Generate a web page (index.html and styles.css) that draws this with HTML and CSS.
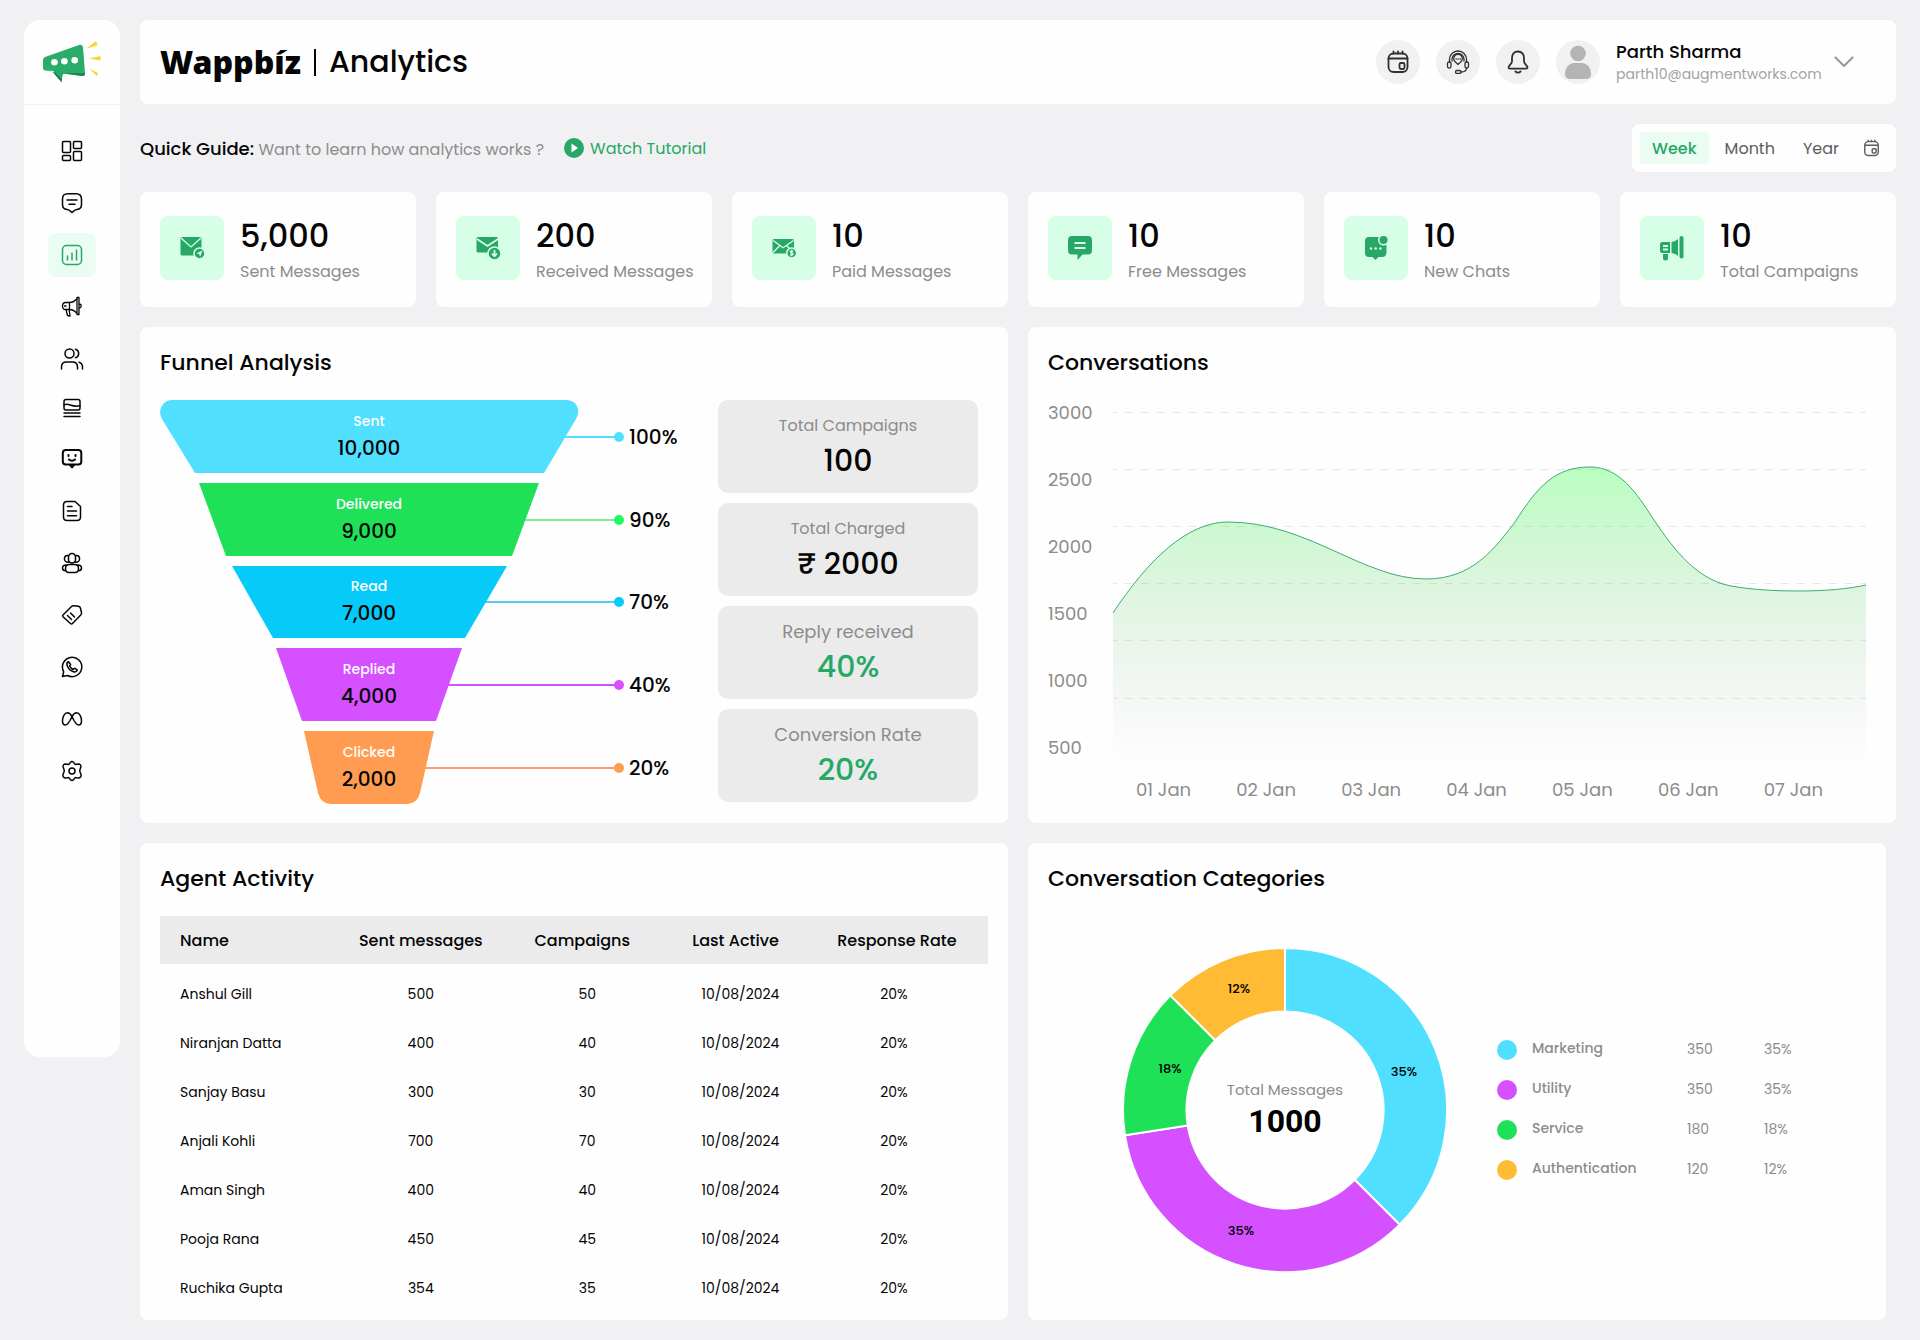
FILE: index.html
```html
<!DOCTYPE html>
<html lang="en">
<head>
<meta charset="utf-8">
<meta name="viewport" content="width=device-width, initial-scale=1">
<title>Wappbíz | Analytics</title>
<link rel="stylesheet" href="styles.css">
</head>
<body>
<div class="app">
  <aside class="sidebar">
    <a class="logo" href="#" aria-label="Wappbíz home">
      <svg width="60" height="44" viewBox="0 0 60 44">
        <path d="M2 30L20 34.500L19.700 42.500L11 32.500Z" fill="#0f7a45"/>
        <path d="M1 20Q1 18 3 17L37 5Q40 4 41 7L43 33Q43 36.500 40 36L20 33.500L19.500 40L11.500 31L3 30.500Q1 30 1 28Z" fill="#2aad68"/>
        <path d="M11.500 31.500L40 36Q43 36.500 43 33L21 33L19.500 40.500Z" fill="#148a50"/>
        <path d="M11.500 30L20 32.500L19.300 39Z" fill="#2aad68"/>
        <g fill="#fff"><circle cx="12.400" cy="22.300" r="3.300"/><circle cx="22.400" cy="21.300" r="3.300"/><circle cx="32.700" cy="20.300" r="3.300"/></g>
        <g fill="#fbd534"><path d="M44.500 8.500L54 1L55.500 5.500Z"/><path d="M47 18.600L58.500 16V20.500Z"/><path d="M47 28.500L56 33L54.800 36Z"/></g>
      </svg>
    </a>
    <nav class="nav" aria-label="Main">
      <a class="nav-item" href="#" aria-label="Dashboard"><svg class="icon" viewBox="0 0 24 24"><rect x="2.500" y="2.500" width="8" height="11" rx="1"/><rect x="13.500" y="2.500" width="8" height="7" rx="1"/><rect x="2.500" y="16.500" width="8" height="5" rx="1"/><rect x="13.500" y="12.500" width="8" height="9" rx="1"/></svg></a>
      <a class="nav-item" href="#" aria-label="Chats"><svg class="icon" viewBox="0 0 24 24"><path d="M8 2.800h8c4 0 5.500 1.600 5.500 5.500v5c0 3.600-1.500 5-4.500 5.200-1.200.1-2 .4-2.800 1.200L12 21.500l-2.200-1.800c-.8-.8-1.600-1.100-2.800-1.200-3-.2-4.500-1.600-4.500-5.200v-5C2.500 4.400 4 2.800 8 2.800zM7 9h10M9 13.200h6"/></svg></a>
      <a class="nav-item active" href="#" aria-label="Analytics" aria-current="page"><svg class="icon" viewBox="0 0 24 24"><rect x="2.500" y="2.500" width="19" height="19" rx="4"/><path d="M7.500 13v4M12 10v7M16.500 7v10"/></svg></a>
      <a class="nav-item" href="#" aria-label="Campaigns"><svg class="icon thin" viewBox="0 0 24 24"><path d="M9.500 7.500h-4c-2 0-3 1.500-3 3.500s1 3.500 3 3.500h4zM9.500 7.500c3 0 5.500-1.500 7.500-4v15c-2-2.500-4.500-4-7.500-4M17 2.500h2v17h-2zM19.500 9c2.300.3 2.300 3.700 0 4M6 14.500l1.500 6 2.500.5-.8-6M4.500 11h1.500"/></svg></a>
      <a class="nav-item" href="#" aria-label="Contacts"><svg class="icon" viewBox="0 0 24 24"><circle cx="9.500" cy="6.500" r="4.500"/><path d="M1.500 22v-2c0-3 2-5 5-5h6c3 0 5 2 5 5v2M15.500 2.200a4.500 4.500 0 0 1 0 8.600M19 15.200c2.200.6 3.500 2.300 3.500 4.800v2"/></svg></a>
      <a class="nav-item short" href="#" aria-label="Templates"><svg class="icon" viewBox="0 0 24 24"><rect x="4" y="2.500" width="16" height="10.500" rx="2"/><path d="M4 8c5-3 7 3 16 .8M4 16h16M4 19.500h16"/></svg></a>
      <a class="nav-item" href="#" aria-label="Chatbot"><svg class="icon bold" viewBox="0 0 24 24"><rect x="2.800" y="3" width="18.500" height="14.500" rx="3"/><path d="M10 18l2 2.500 2-2.500zM8.500 8v1M15.500 8v1M9 12.500c1.500 1.500 4.500 1.500 6 0"/></svg></a>
      <a class="nav-item" href="#" aria-label="Documents"><svg class="icon" viewBox="0 0 24 24"><path d="M7 2.500h8l5.500 5V18c0 2.500-1 3.500-3.500 3.500H7c-2.500 0-3.500-1-3.500-3.500V6c0-2.500 1-3.500 3.500-3.500zM7.500 7.500H12M7.500 12h9M7.500 16.800h9"/></svg></a>
      <a class="nav-item" href="#" aria-label="Groups"><svg class="icon" viewBox="0 0 24 24"><rect x="8.500" y="2.500" width="7" height="9.500" rx="3.500"/><path d="M8.500 4.500C5.500 4 4 6 4.500 8.500c.3 2 2 3 4.500 2.500M15.500 4.500c3-.5 4.500 1.500 4 4-.3 2-2 3-4.500 2.500M9.500 13.500h5c2.500 0 4 1.500 4 4s-1 4-3.500 4H9c-2.500 0-3.500-1.500-3.500-4s1.500-4 4-4zM6.500 14c-2.500-.2-4 1-4 3 0 1.800 1 2.800 3 2.800M17.500 14c2.500-.2 4 1 4 3 0 1.800-1 2.800-3 2.800"/></svg></a>
      <a class="nav-item" href="#" aria-label="Tags"><svg class="icon" viewBox="0 0 24 24"><path d="M3 12L11.500 3.500Q12.500 2.500 14 2.700L18.500 3.300Q20 3.600 20.400 5L21.500 9.500Q21.800 11 20.700 12L12.500 20.500Q11.500 21.500 10.400 20.500L3 13.700Q2.200 12.800 3 12zM7.500 12.500l4 4M10.500 10l4 4"/></svg></a>
      <a class="nav-item" href="#" aria-label="WhatsApp"><svg class="icon" viewBox="0 0 24 24"><path d="M2.500 21.500l1.200-4.700A9.700 9.700 0 1 1 7.500 20.500zM8.500 6.800c-1.500.7-2 2.300-1.200 4.200 1.200 2.900 3.300 5 6.200 5.800 1.800.5 3.300-.3 3.700-2l-2.700-1.600-1.400 1.300c-1.700-.8-2.800-1.900-3.500-3.500l1-1.500z"/></svg></a>
      <a class="nav-item" href="#" aria-label="Meta"><svg class="icon" viewBox="0 0 24 24"><path d="M12 9.500C10.500 7 9.300 5.800 7.500 5.800c-3 0-5 4-5 8 0 2.700 1 4.200 2.800 4.200 2 0 3-1.500 4.700-4.500L12 9.500c1.500-2.500 2.700-3.700 4.500-3.700 3 0 5 4 5 8 0 2.700-1 4.200-2.800 4.200-2 0-3-1.500-4.700-4.500z"/></svg></a>
      <a class="nav-item" href="#" aria-label="Settings"><svg class="icon" viewBox="0 0 24 24"><circle cx="12" cy="12" r="3"/><path d="M10.500 3.200Q12 1.800 13.500 3.200L14.600 4.800Q15.300 5.600 16.500 5.300L18.600 4.900Q20.200 4.900 20.800 6.500Q21.300 7.400 20.600 8.800L20 10.500Q19.500 12 20.200 13.500L21 15.500Q21.400 17 20.500 18Q19.500 19.300 18 19L16.500 18.700Q15.300 18.400 14.600 19.200L13.500 20.800Q12 22.200 10.500 20.800L9.400 19.200Q8.700 18.400 7.500 18.700L6 19Q4.500 19.300 3.500 18Q2.600 17 3 15.500L3.800 13.500Q4.500 12 4 10.500L3.400 8.800Q2.700 7.400 3.200 6.500Q3.800 4.900 5.400 4.900L7.500 5.300Q8.700 5.600 9.400 4.800Z"/></svg></a>
    </nav>
  </aside>

  <main class="main">
    <header class="topbar">
      <h1 class="page-title"><span class="brand">Wappbíz</span><span class="divider"></span><span class="section">Analytics</span></h1>
      <div class="actions">
        <button class="round" type="button" aria-label="Calendar"><svg class="icon dark" viewBox="0 0 24 24"><rect x="2.500" y="3.500" width="19" height="18.500" rx="5"/><path d="M2.500 8.500h19M7.500 1.500v2M12 1.500v2M16.500 1.500v2"/><rect x="13.500" y="13" width="5" height="6" rx="1.500"/></svg></button>
        <button class="round" type="button" aria-label="Support"><svg class="icon dark thin" viewBox="0 0 24 24"><path d="M3.500 12V9.500a8.500 8.500 0 0 1 17 0V12M6 11V9.500a6 6 0 0 1 12 0V11"/><path d="M12 14.500l-2.200-2.100a4.300 4.300 0 1 1 4.400 0zM10 9h.3M12 9h.3M14 9h.3"/><rect x="1.500" y="12" width="3.500" height="6" rx="1.500"/><rect x="19" y="12" width="3.500" height="6" rx="1.500"/><path d="M20.500 18c0 3-2 4-5.500 4"/><rect x="9.500" y="20.500" width="5.500" height="3" rx="1.500"/></svg></button>
        <button class="round" type="button" aria-label="Notifications"><svg class="icon dark" viewBox="0 0 24 24"><path d="M12 1.500c-4 0-6 3-6 6.500v3.500c0 2-3.500 4.500-3.500 6 0 .8.500 1.200 1.500 1.200h16c1 0 1.500-.4 1.500-1.200 0-1.500-3.500-4-3.500-6V8c0-3.500-2-6.500-6-6.500zM9.500 21.500c1.300 1.300 3.700 1.300 5 0"/></svg></button>
        <svg class="avatar" viewBox="0 0 44 44"><circle cx="22" cy="22" r="22" fill="#f1f1f3"/><circle cx="22" cy="13.500" r="7.800" fill="#b4b4b4"/><path d="M18 23h8c5 0 9 5 9 11 0 3-2 5-5 5H14c-3 0-5-2-5-5 0-6 4-11 9-11z" fill="#b4b4b4"/></svg>
        <div class="account">
          <div class="user"><span class="user-name">Parth Sharma</span><span class="user-mail">parth10@augmentworks.com</span></div>
          <button class="chevron" type="button" aria-label="Account menu"><svg width="20" height="12" viewBox="0 0 20 12"><path d="M1.500 1.500L10 10l8.500-8.500" fill="none" stroke="#9b9b9b" stroke-width="2.200" stroke-linecap="round" stroke-linejoin="round"/></svg></button>
        </div>
      </div>
    </header>

    <div class="guide-row">
      <p class="guide"><strong>Quick Guide:</strong> <span>Want to learn how analytics works ?</span></p>
      <a class="tutorial" href="#"><svg width="20" height="20" viewBox="0 0 20 20"><circle cx="10" cy="10" r="10" fill="#27a867"/><path d="M7.500 5.500l6.500 4.500-6.500 4.500z" fill="#fff"/></svg>Watch Tutorial</a>
      <div class="range">
        <button class="range-btn selected" type="button">Week</button>
        <button class="range-btn month" type="button">Month</button>
        <button class="range-btn" type="button">Year</button>
        <button class="range-cal" type="button" aria-label="Pick dates"><svg width="17" height="18" viewBox="0 0 24 25" fill="none" stroke="#5c5c5c" stroke-width="2"><rect x="2.500" y="3.500" width="19" height="19.500" rx="5"/><path d="M2.500 8.500h19M7.500 1v3M12 1v3M16.500 1v3"/><rect x="13" y="13.500" width="5.500" height="6" rx="1.500"/></svg></button>
      </div>
    </div>

    <section class="stats" aria-label="Totals">
      <article class="card stat">
        <div class="tile"><svg viewBox="0 0 26 26"><rect x="1.500" y="2" width="21" height="18.500" rx="1.500"/><path class="cut" d="M2 3l10 9 10-9"/><circle class="ring" cx="20.500" cy="18.500" r="5.500"/><path class="hole" d="M17.500 18.300l6-2.800-2.300 6.300-1.100-2.600z"/></svg></div>
        <div class="stat-text"><strong>5,000</strong><span>Sent Messages</span></div>
      </article>
      <article class="card stat">
        <div class="tile"><svg viewBox="0 0 26 26"><rect x="1.500" y="2" width="21.500" height="15.500" rx="1.500"/><path class="cut wide" d="M2 4l10.500 7L23 4"/><circle class="ring" cx="19.500" cy="18.500" r="6.500"/><path class="cut wide" d="M19.500 15v6M17 18.700l2.500 2.500 2.500-2.500"/></svg></div>
        <div class="stat-text"><strong>200</strong><span>Received Messages</span></div>
      </article>
      <article class="card stat">
        <div class="tile"><svg viewBox="0 0 26 26"><rect x="1.500" y="4" width="21.500" height="14.500" rx="1.500"/><path class="cut" d="M2 5.500l10.200 7.200L22.500 5.500M2 17.500l7-7M22.500 17.500l-7-7"/><circle class="ring" cx="20.700" cy="18" r="5"/><path class="cut" d="M22.300 16.200c-3.500-1.200-3.700 1.500-1.600 1.800s1.500 2.700-1.700 1.700M20.700 14.800v6.400"/></svg></div>
        <div class="stat-text"><strong>10</strong><span>Paid Messages</span></div>
      </article>
      <article class="card stat">
        <div class="tile"><svg viewBox="0 0 26 26"><path d="M5 1h16q4 0 4 4v10.500q0 4-4 4h-5.500L10.500 25v-5.500H5q-4 0-4-4V5q0-4 4-4z"/><path class="cut wide" d="M7.500 8h11M7.500 13h11"/></svg></div>
        <div class="stat-text"><strong>10</strong><span>Free Messages</span></div>
      </article>
      <article class="card stat">
        <div class="tile"><svg viewBox="0 0 26 26"><path d="M6 2h15q2.500 0 2.500 4v11q0 5-4 5h-4L12.500 25 9.500 22H6q-4 0-4-4V6q0-4 4-4z"/><circle class="ring" cx="20.500" cy="5" r="4.800"/><g class="hole"><circle cx="8" cy="13.500" r="1.200"/><circle cx="12.700" cy="13.500" r="1.200"/><circle cx="17.400" cy="13.500" r="1.200"/></g></svg></div>
        <div class="stat-text"><strong>10</strong><span>New Chats</span></div>
      </article>
      <article class="card stat">
        <div class="tile"><svg viewBox="0 0 26 26"><path d="M3.500 7H11v11H3.500Q1 18 1 15.500v-6Q1 7 3.500 7zM4 19h5v4q0 2.500-2.500 2.500T4 23zM12.500 7q4-.5 6.500-3v17q-2.500-2.500-6.500-3z"/><rect x="20.500" y="1" width="4" height="22.500" rx="2"/><path class="cut wide" d="M4 11h5M4 14.500h5"/></svg></div>
        <div class="stat-text"><strong>10</strong><span>Total Campaigns</span></div>
      </article>
    </section>

    <div class="panels">
      <section class="card panel">
        <h2>Funnel Analysis</h2>
        <div class="funnel-body">
          <svg class="funnel" width="520" height="404" viewBox="0 0 520 404" role="img" aria-label="Message funnel">
            <g stroke-width="2">
              <path d="M400 37H459" stroke="#50dfff"/><path d="M360 120H459" stroke="#7bee96"/><path d="M320 202H459" stroke="#5cc8ee"/><path d="M280 285H459" stroke="#d550ff"/><path d="M260 368H459" stroke="#fb9b75"/>
            </g>
            <path d="M12 0H406C417 0 421 10 416 19L384 73H35L2 19C-3 10 3 0 12 0Z" fill="#50dfff"/>
            <path d="M39 83H379L352 156H66Z" fill="#1fe157"/>
            <path d="M72 166H347L305 238H113Z" fill="#06cbf8"/>
            <path d="M116 248H302L276 321H142Z" fill="#d550ff"/>
            <path d="M144 331H274L260 393Q257 404 247 404H171Q161 404 158 393Z" fill="#ff9c51"/>
            <circle cx="459" cy="37" r="5" fill="#50dfff"/><circle cx="459" cy="120" r="5" fill="#1ffa62"/><circle cx="459" cy="202" r="5" fill="#06cbf8"/><circle cx="459" cy="285" r="5" fill="#d550ff"/><circle cx="459" cy="368" r="5" fill="#ff9c51"/>
            <g class="f-label"><text x="209" y="26">Sent</text><text x="209" y="109">Delivered</text><text x="209" y="191">Read</text><text x="209" y="274">Replied</text><text x="209" y="357">Clicked</text></g>
            <g class="f-value"><text x="209" y="55">10,000</text><text x="209" y="138">9,000</text><text x="209" y="220">7,000</text><text x="209" y="303">4,000</text><text x="209" y="386">2,000</text></g>
            <g class="f-pct"><text x="469" y="44">100%</text><text x="469" y="127">90%</text><text x="469" y="209">70%</text><text x="469" y="292">40%</text><text x="469" y="375">20%</text></g>
          </svg>
          <dl class="metrics">
            <div class="metric"><dt>Total Campaigns</dt><dd>100</dd></div>
            <div class="metric"><dt>Total Charged</dt><dd>₹ 2000</dd></div>
            <div class="metric large"><dt>Reply received</dt><dd class="good">40%</dd></div>
            <div class="metric large"><dt>Conversion Rate</dt><dd class="good">20%</dd></div>
          </dl>
        </div>
      </section>

      <section class="card panel">
        <h2>Conversations</h2>
        <div class="chart">
          <div class="y-axis"><span>3000</span><span>2500</span><span>2000</span><span>1500</span><span>1000</span><span>500</span></div>
          <svg class="plot" viewBox="0 0 753 370" preserveAspectRatio="none" role="img" aria-label="Conversations per day">
            <defs><linearGradient id="fade" gradientUnits="userSpaceOnUse" x1="0" y1="67" x2="0" y2="366"><stop offset="0" stop-color="#b9ffbf"/><stop offset="1" stop-color="#d9d9d9" stop-opacity="0"/></linearGradient></defs>
            <path d="M0 213C35 160 74 122 115 122C195 122 250 179 313 179C360 179 382 148 402 122C425 86 442 67 477 67C507 67 524 94 539 117C556 142 580 179 618 186C640 190 665 191 685 191C712 191 735 189 753 185V370H0Z" fill="url(#fade)"/>
            <path class="grid-lines" d="M0 12.500H753M0 69.500H753M0 126.500H753M0 183.500H753M0 240.500H753M0 298.500H753"/>
            <path class="curve" d="M0 213C35 160 74 122 115 122C195 122 250 179 313 179C360 179 382 148 402 122C425 86 442 67 477 67C507 67 524 94 539 117C556 142 580 179 618 186C640 190 665 191 685 191C712 191 735 189 753 185"/>
          </svg>
          <div class="x-axis"><span>01 Jan</span><span>02 Jan</span><span>03 Jan</span><span>04 Jan</span><span>05 Jan</span><span>06 Jan</span><span>07 Jan</span></div>
        </div>
      </section>
    </div>

    <div class="panels">
      <section class="card panel">
        <h2>Agent Activity</h2>
        <table class="agents">
          <colgroup><col class="c-name"><col class="c-sent"><col class="c-camp"><col class="c-last"><col class="c-rate"></colgroup>
          <thead><tr><th scope="col">Name</th><th scope="col">Sent messages</th><th scope="col">Campaigns</th><th scope="col">Last Active</th><th scope="col">Response Rate</th></tr></thead>
          <tbody>
            <tr><td>Anshul Gill</td><td>500</td><td>50</td><td>10/08/2024</td><td>20%</td></tr>
            <tr><td>Niranjan Datta</td><td>400</td><td>40</td><td>10/08/2024</td><td>20%</td></tr>
            <tr><td>Sanjay Basu</td><td>300</td><td>30</td><td>10/08/2024</td><td>20%</td></tr>
            <tr><td>Anjali Kohli</td><td>700</td><td>70</td><td>10/08/2024</td><td>20%</td></tr>
            <tr><td>Aman Singh</td><td>400</td><td>40</td><td>10/08/2024</td><td>20%</td></tr>
            <tr><td>Pooja Rana</td><td>450</td><td>45</td><td>10/08/2024</td><td>20%</td></tr>
            <tr><td>Ruchika Gupta</td><td>354</td><td>35</td><td>10/08/2024</td><td>20%</td></tr>
          </tbody>
        </table>
      </section>

      <section class="card panel categories">
        <h2>Conversation Categories</h2>
        <div class="cat-body">
          <svg class="donut" width="324" height="324" viewBox="-162 -162 324 324" role="img" aria-label="Messages by category">
            <g stroke="#fefefe" stroke-width="2">
              <path d="M0 -162A162 162 0 0 1 114.600 114.600L69.700 69.700A98.500 98.500 0 0 0 0 -98.500Z" fill="#50dfff"/>
              <path d="M114.600 114.600A162 162 0 0 1 -160 25.300L-97.300 15.400A98.500 98.500 0 0 0 69.700 69.700Z" fill="#d550ff"/>
              <path d="M-160 25.300A162 162 0 0 1 -114.600 -114.600L-69.700 -69.700A98.500 98.500 0 0 0 -97.300 15.400Z" fill="#1fe157"/>
              <path d="M-114.600 -114.600A162 162 0 0 1 0 -162V-98.500A98.500 98.500 0 0 0 -69.700 -69.700Z" fill="#ffbb33"/>
            </g>
            <g class="d-pct"><text x="119" y="-34">35%</text><text x="-44" y="125">35%</text><text x="-115" y="-37">18%</text><text x="-46" y="-117">12%</text></g>
            <text class="d-label" x="0" y="-15">Total Messages</text>
            <text class="d-total" x="0" y="22">1000</text>
          </svg>
          <table class="legend">
            <tbody>
              <tr><th scope="row"><i class="dot cyan"></i>Marketing</th><td>350</td><td>35%</td></tr>
              <tr><th scope="row"><i class="dot violet"></i>Utility</th><td>350</td><td>35%</td></tr>
              <tr><th scope="row"><i class="dot green"></i>Service</th><td>180</td><td>18%</td></tr>
              <tr><th scope="row"><i class="dot amber"></i>Authentication</th><td>120</td><td>12%</td></tr>
            </tbody>
          </table>
        </div>
      </section>
    </div>
  </main>
</div>
</body>
</html>
```
FILE: styles.css
```css
* { box-sizing: border-box; }

body {
  margin: 0;
  background: #f1f1f4;
  color: #050505;
  font-family: Poppins, Inter, "Noto Sans", sans-serif;
  font-size: 16px;
}

h1, h2, p, dl, dd { margin: 0; font-weight: 500; }
a { color: inherit; text-decoration: none; }
button { font: inherit; color: inherit; border: 0; padding: 0; background: none; cursor: pointer; }

.app { display: flex; align-items: flex-start; gap: 20px; padding: 20px 24px; }

/* Sidebar */
.sidebar { flex: 0 0 96px; background: #fefefe; border-radius: 16px; padding-bottom: 264px; }
.logo { display: flex; align-items: center; justify-content: center; height: 85px; border-bottom: 1px solid #f1f1f4; }
.nav { display: flex; flex-direction: column; align-items: center; gap: 8px; padding-top: 24px; }
.nav-item { display: flex; align-items: center; justify-content: center; width: 48px; height: 44px; border-radius: 8px; }
.nav-item.short { height: 40px; }
.nav-item.active { background: #ebfcf3; color: #27a867; }

.icon {
  width: 24px;
  height: 24px;
  fill: none;
  stroke: currentColor;
  stroke-width: 1.5;
  stroke-linecap: round;
  stroke-linejoin: round;
}
.icon.bold { stroke-width: 2; }
.icon.dark { color: #303030; stroke-width: 1.8; }
.icon.thin { stroke-width: 1.3; }

.main { flex: 1; min-width: 0; display: flex; flex-direction: column; gap: 20px; }
.card { background: #fefefe; border-radius: 8px; }

/* Top bar */
.topbar {
  display: flex;
  align-items: center;
  justify-content: space-between;
  height: 84px;
  padding: 0 42px 0 20px;
  background: #fefefe;
  border-radius: 8px;
}
.page-title { display: flex; align-items: center; font-size: 32px; line-height: 40px; }
.brand { font-family: "Noto Sans", sans-serif; font-weight: 900; }
.divider { width: 2px; height: 27px; margin: 0 13px; background: #050505; }
.section { font-size: 30px; font-weight: 500; }
.actions { display: flex; align-items: center; gap: 16px; }
.round { display: flex; align-items: center; justify-content: center; width: 44px; height: 44px; border-radius: 50%; background: #f1f1f3; }
.avatar { width: 44px; height: 44px; }
.account { display: flex; align-items: center; gap: 12px; }
.user { display: flex; flex-direction: column; min-width: 206px; }
.user-name { font-size: 18px; line-height: 24px; font-weight: 500; }
.user-mail { font-size: 14px; line-height: 20px; color: #a3a3a3; }
.chevron { display: flex; }

/* Guide and range */
.guide-row { display: flex; align-items: center; height: 48px; }
.guide { font-weight: 400; color: #8c8c8c; }
.guide strong { font-size: 18px; font-weight: 500; color: #050505; }
.tutorial { display: flex; align-items: center; gap: 6px; margin-left: 20px; color: #27a867; }
.range { display: flex; align-items: center; margin-left: auto; padding: 8px 16px 8px 8px; background: #fefefe; border-radius: 8px; }
.range-btn { height: 32px; padding: 0 12px; border-radius: 4px; color: #5c5c5c; }
.range-btn.month { padding: 0 16px; }
.range-btn.selected { font-weight: 500; color: #27a867; background: #ebfcf3; }
.range-cal { display: flex; margin-left: 12px; }

/* Stat cards */
.stats { display: grid; grid-template-columns: repeat(6, 1fr); gap: 20px; }
.stat { display: flex; gap: 16px; padding: 24px 0 23px 20px; }
.tile { flex: 0 0 64px; height: 64px; display: flex; align-items: center; justify-content: center; border-radius: 8px; background: #d7ffe8; }
.tile svg { width: 26px; height: 26px; fill: #27a867; }
.tile .cut { fill: none; stroke: #d7ffe8; stroke-width: 1.3; }
.tile .cut.wide { stroke-width: 1.8; }
.tile .ring { stroke: #d7ffe8; stroke-width: 1.5; }
.tile .hole { fill: #d7ffe8; }
.stat-text { display: flex; flex-direction: column; gap: 4px; white-space: nowrap; }
.stat-text strong { font-size: 32px; line-height: 40px; font-weight: 500; }
.stat-text span { line-height: 24px; color: #8c8c8c; }

/* Panels */
.panels { display: grid; grid-template-columns: 1fr 1fr; gap: 20px; }
.panel { padding: 20px 20px 19px; }
.panel h2 { font-size: 22px; line-height: 32px; margin-bottom: 21px; }

.funnel-body { display: flex; justify-content: space-between; padding-right: 10px; }
.funnel text { font-size: 20px; font-weight: 500; fill: #050505; }
.funnel .f-label text { font-size: 14px; fill: #fff; text-anchor: middle; }
.funnel .f-value text { text-anchor: middle; }

.metrics { display: flex; flex-direction: column; gap: 10px; width: 260px; }
.metric { padding: 14px 0 9px; border-radius: 10px; background: #ebebeb; text-align: center; }
.metric dt { font-weight: 400; line-height: 24px; color: #8c8c8c; }
.metric.large dt { font-size: 18px; }
.metric dd { font-size: 30px; line-height: 46px; }
.metric dd.good { color: #27a867; }

.chart { display: grid; grid-template-columns: 65px 1fr; padding-right: 10px; color: #8c8c8c; font-size: 18px; }
.y-axis { display: flex; flex-direction: column; justify-content: space-between; height: 361px; line-height: 26px; }
.plot { width: 100%; height: 370px; overflow: visible; }
.grid-lines { fill: none; stroke: #8c8c8c; stroke-opacity: .2; stroke-dasharray: 8 8; stroke-dashoffset: 4; }
.curve { fill: none; stroke: #3fab73; stroke-width: 1; vector-effect: non-scaling-stroke; }
.x-axis { grid-column: 2; display: flex; justify-content: space-between; padding: 8px 43px 0 23px; line-height: 24px; }

/* Agent table */
.agents { width: 100%; table-layout: fixed; border-collapse: collapse; }
.agents .c-name, .agents .c-rate { width: 22%; }
.agents .c-sent { width: 19%; }
.agents .c-camp { width: 20%; }
.agents .c-last { width: 17%; }
.agents th, .agents td { padding: 0; text-align: center; }
.agents th:first-child, .agents td:first-child { padding-left: 20px; text-align: left; }
.agents td:nth-child(3), .agents td:nth-child(4) { padding-left: 10px; }
.agents td:nth-child(5) { padding-right: 6px; }
.agents th { height: 48px; font-weight: 500; background: #ebebeb; }
.agents td { height: 49px; font-size: 14px; }
.agents tbody::before { content: ""; display: block; height: 6px; }
.agents tbody tr:last-child td { height: 37px; vertical-align: top; padding-top: 14px; }

/* Categories */
.categories { margin-right: 10px; }
.cat-body { display: flex; align-items: center; gap: 50px; padding: 32px 0 0 75px; }
.donut text { text-anchor: middle; }
.d-pct { font-size: 13px; font-weight: 500; }
.d-label { font-size: 15px; fill: #8c8c8c; }
.d-total { font-family: Roboto, sans-serif; font-size: 32px; font-weight: 700; }
.legend { border-collapse: collapse; margin-bottom: 2px; font-size: 14px; color: #8c8c8c; text-align: left; }
.legend th, .legend td { height: 40px; padding: 0; font-weight: 400; }
.legend th { width: 190px; font-weight: 500; }
.legend td { width: 77px; }
.dot { display: inline-block; width: 20px; height: 20px; margin-right: 15px; border-radius: 50%; vertical-align: middle; }
.cyan { background: #50dfff; }
.violet { background: #d550ff; }
.green { background: #1fe157; }
.amber { background: #ffbb33; }
```
